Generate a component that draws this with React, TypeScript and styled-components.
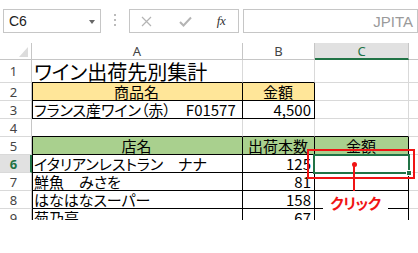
import React from 'react';
import styled, { createGlobalStyle, css } from 'styled-components';

const GRID = '#d9d9d9';
const HEAD_LINE = '#c6c6c6';
const ACCENT = '#217346';
const RED = '#f01414';

const GlobalStyle = createGlobalStyle`
  html, body {
    margin: 0;
    padding: 0;
    background: #fff;
  }
  body {
    font-family: "Noto Sans CJK JP", "Noto Sans", sans-serif;
  }
`;

const Page = styled.div`
  position: relative;
  width: 418px;
  height: 253px;
  overflow: hidden;
  background: #fff;
`;

/* ---------- formula bar ---------- */

const FormulaBar = styled.div`
  display: flex;
  align-items: flex-start;
  height: 43px;
  padding: 9px 0 0 3px;
  box-sizing: border-box;
`;

const NameBox = styled.div`
  display: flex;
  align-items: center;
  justify-content: space-between;
  width: 103px;
  height: 24px;
  box-sizing: border-box;
  border: 1px solid ${HEAD_LINE};
  padding: 0 5px 0 5px;
  font-family: "Liberation Sans", Arial, sans-serif;
  font-size: 14px;
  line-height: 16px;
  color: #222;
`;

const Caret = styled.span`
  width: 0;
  height: 0;
  border-left: 3.5px solid transparent;
  border-right: 3.5px solid transparent;
  border-top: 4px solid #666;
  margin-top: 1px;
`;

const Grip = styled.div`
  display: flex;
  justify-content: center;
  width: 29px;
  height: 24px;
  padding-top: 5px;
  box-sizing: border-box;
`;

const InputBox = styled.div<{ $width: number; $gap?: number }>`
  display: flex;
  align-items: center;
  width: ${(p) => p.$width}px;
  height: 24px;
  margin-left: ${(p) => p.$gap || 0}px;
  box-sizing: border-box;
  border: 1px solid ${HEAD_LINE};
  flex-shrink: 0;
`;

const ToolIcon = styled.span<{ $w: number }>`
  display: flex;
  justify-content: center;
  width: ${(p) => p.$w}px;
`;

const Fx = styled.i`
  font-family: "Liberation Serif", "Times New Roman", serif;
  font-size: 13px;
  line-height: 14px;
  color: #333;
  letter-spacing: -0.5px;
`;

const FormulaText = styled.span`
  margin-left: auto;
  padding-right: 4px;
  font-family: "Liberation Sans", Arial, sans-serif;
  font-size: 15px;
  line-height: 17px;
  color: #9a9a9a;
`;

/* ---------- sheet ---------- */

const Sheet = styled.div`
  display: grid;
  grid-template-columns: 32px 211px 72px 94px 30px;
  grid-template-rows: 17px 23px repeat(8, 18px);
  height: 177px;
  overflow: hidden;
`;

const Corner = styled.div`
  border-right: 1px solid ${HEAD_LINE};
  border-bottom: 1px solid ${HEAD_LINE};
  box-sizing: border-box;
  display: flex;
  align-items: flex-end;
  justify-content: flex-end;
  padding: 0 3px 2px 0;
`;

const ColHead = styled.div<{ $active?: boolean }>`
  display: flex;
  align-items: center;
  justify-content: center;
  box-sizing: border-box;
  border-right: 1px solid ${HEAD_LINE};
  border-bottom: 1px solid ${HEAD_LINE};
  font-family: "Noto Sans", "DejaVu Sans", sans-serif;
  font-size: 13px;
  line-height: 14px;
  color: #444;
  ${(p) =>
    p.$active &&
    css`
      background: #e1e1e1;
      color: ${ACCENT};
      border-bottom: 2px solid ${ACCENT};
    `}
`;

const RowHead = styled.div<{ $active?: boolean }>`
  display: flex;
  align-items: center;
  justify-content: center;
  box-sizing: border-box;
  border-right: 1px solid ${HEAD_LINE};
  border-bottom: 1px solid ${GRID};
  padding-right: 4px;
  font-family: "Noto Sans", "DejaVu Sans", sans-serif;
  font-size: 13px;
  line-height: 14px;
  color: #444;
  ${(p) =>
    p.$active &&
    css`
      background: #e1e1e1;
      color: ${ACCENT};
      font-weight: 700;
      border-right: 2px solid ${ACCENT};
      padding-right: 3px;
    `}
`;

type CellProps = {
  $fill?: string;
  $align?: 'left' | 'center' | 'right';
  $bottom?: boolean;
  $right?: boolean;
  $left?: boolean;
  $big?: boolean;
};

const Cell = styled.div<CellProps>`
  display: flex;
  align-items: flex-end;
  justify-content: ${(p) =>
    p.$align === 'center' ? 'center' : p.$align === 'right' ? 'flex-end' : 'flex-start'};
  box-sizing: border-box;
  padding: 0 3px 0 2px;
  white-space: nowrap;
  background: ${(p) => p.$fill || '#fff'};
  border-right: 1px solid ${(p) => (p.$right ? '#000' : GRID)};
  border-bottom: 1px solid ${(p) => (p.$bottom ? '#000' : GRID)};
  box-shadow: ${(p) => (p.$left ? 'inset 1px 0 0 #000' : 'none')};
  font-size: ${(p) => (p.$big ? 20 : 15)}px;
  line-height: ${(p) => (p.$big ? 21 : 16)}px;
  font-feature-settings: "palt";
  color: #000;
`;

/* ---------- overlays ---------- */

const Selection = styled.div`
  position: absolute;
  left: 313px;
  top: 154px;
  width: 97px;
  height: 20px;
  box-sizing: border-box;
  border: 2px solid ${ACCENT};
`;

const FillHandle = styled.span`
  position: absolute;
  right: -4px;
  bottom: -4px;
  width: 6px;
  height: 6px;
  box-sizing: border-box;
  background: ${ACCENT};
  border: 1px solid #fff;
`;

const RedFrame = styled.div`
  position: absolute;
  left: 307px;
  top: 149px;
  width: 108px;
  height: 30px;
  box-sizing: border-box;
  border: 2px solid ${RED};
`;

const Pointer = styled.div`
  position: absolute;
  left: 351px;
  top: 162px;
  display: flex;
  flex-direction: column;
  align-items: center;
  width: 6px;
`;

const Dot = styled.span`
  width: 5px;
  height: 5px;
  border-radius: 50%;
  background: ${RED};
`;

const Stem = styled.span`
  width: 2px;
  height: 26px;
  margin-top: -2px;
  background: ${RED};
`;

const Label = styled.div`
  position: absolute;
  left: 323px;
  top: 191px;
  width: 65px;
  height: 24px;
  display: flex;
  align-items: center;
  justify-content: center;
  background: #fff;
  color: ${RED};
  font-size: 15px;
  line-height: 18px;
  font-weight: 700;
  font-feature-settings: "palt";
  letter-spacing: -0.5px;
`;

type Row = {
  n: number;
  cells: [React.ReactNode, CellProps][];
};

const rows: Row[] = [
  {
    n: 1,
    cells: [
      ['ワイン出荷先別集計', { $big: true, $bottom: true }],
      ['', { $bottom: true }],
      ['', {}],
    ],
  },
  {
    n: 2,
    cells: [
      ['商品名', { $fill: '#ffe699', $align: 'center', $bottom: true, $right: true, $left: true }],
      ['金額', { $fill: '#ffe699', $align: 'center', $bottom: true, $right: true }],
      ['', {}],
    ],
  },
  {
    n: 3,
    cells: [
      ['フランス産ワイン（赤）　F01577', { $bottom: true, $right: true, $left: true }],
      ['4,500', { $align: 'right', $bottom: true, $right: true }],
      ['', {}],
    ],
  },
  {
    n: 4,
    cells: [
      ['', { $bottom: true }],
      ['', { $bottom: true }],
      ['', { $bottom: true }],
    ],
  },
  {
    n: 5,
    cells: [
      ['店名', { $fill: '#a9d08e', $align: 'center', $bottom: true, $right: true, $left: true }],
      ['出荷本数', { $fill: '#a9d08e', $align: 'center', $bottom: true, $right: true }],
      ['金額', { $fill: '#a9d08e', $align: 'center', $bottom: true, $right: true }],
    ],
  },
  {
    n: 6,
    cells: [
      ['イタリアンレストラン　ナナ', { $bottom: true, $right: true, $left: true }],
      ['125', { $align: 'right', $bottom: true, $right: true }],
      ['', { $bottom: true, $right: true }],
    ],
  },
  {
    n: 7,
    cells: [
      ['鮮魚　みさを', { $bottom: true, $right: true, $left: true }],
      ['81', { $align: 'right', $bottom: true, $right: true }],
      ['', { $bottom: true, $right: true }],
    ],
  },
  {
    n: 8,
    cells: [
      ['はなはなスーパー', { $bottom: true, $right: true, $left: true }],
      ['158', { $align: 'right', $bottom: true, $right: true }],
      ['', { $bottom: true, $right: true }],
    ],
  },
  {
    n: 9,
    cells: [
      ['菊乃亭', { $bottom: true, $right: true, $left: true }],
      ['67', { $align: 'right', $bottom: true, $right: true }],
      ['', { $bottom: true, $right: true }],
    ],
  },
];

export default function App() {
  return (
    <Page>
      <GlobalStyle />
      <FormulaBar>
        <NameBox>
          C6
          <Caret />
        </NameBox>
        <Grip>
          <svg width="3" height="14" viewBox="0 0 3 14">
            <rect x="0" y="0" width="2" height="2" fill="#bbb" />
            <rect x="0" y="5" width="2" height="2" fill="#bbb" />
            <rect x="0" y="10" width="2" height="2" fill="#bbb" />
          </svg>
        </Grip>
        <InputBox $width={110}>
          <ToolIcon $w={32}>
            <svg width="11" height="11" viewBox="0 0 11 11">
              <path d="M1 1 L10 10 M10 1 L1 10" stroke="#b4b4b4" strokeWidth="1.2" fill="none" />
            </svg>
          </ToolIcon>
          <ToolIcon $w={46}>
            <svg width="13" height="11" viewBox="0 0 13 11">
              <path d="M1 6 L4.5 9.5 L12 1.5" stroke="#b4b4b4" strokeWidth="2" fill="none" />
            </svg>
          </ToolIcon>
          <ToolIcon $w={26}>
            <Fx>fx</Fx>
          </ToolIcon>
        </InputBox>
        <InputBox $width={175} $gap={4}>
          <FormulaText>JPITA</FormulaText>
        </InputBox>
      </FormulaBar>

      <Sheet>
        <Corner>
          <svg width="9" height="10" viewBox="0 0 9 10">
            <polygon points="9,0 9,10 0,10" fill="#dcdcdc" />
          </svg>
        </Corner>
        <ColHead>A</ColHead>
        <ColHead>B</ColHead>
        <ColHead $active>C</ColHead>
        <ColHead />

        {rows.map((row) => (
          <React.Fragment key={row.n}>
            <RowHead $active={row.n === 6}>{row.n}</RowHead>
            {row.cells.map(([text, props], i) => (
              <Cell key={i} {...props}>
                {text}
              </Cell>
            ))}
            <Cell />
          </React.Fragment>
        ))}
      </Sheet>

      <Selection>
        <FillHandle />
      </Selection>
      <RedFrame />
      <Pointer>
        <Dot />
        <Stem />
      </Pointer>
      <Label>クリック</Label>
    </Page>
  );
}
